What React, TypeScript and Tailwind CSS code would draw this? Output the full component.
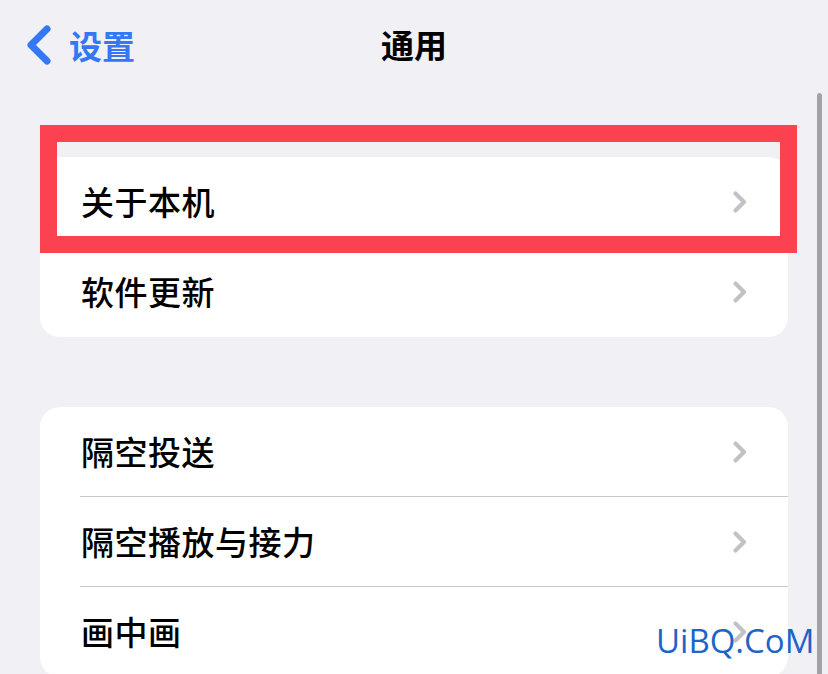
import React from "react";

const rowsTop = ["关于本机", "软件更新"];
const rowsBottom = ["隔空投送", "隔空播放与接力", "画中画"];

const Chevron: React.FC = () => (
  <svg width="16" height="24" viewBox="0 0 16 24" fill="none">
    <path
      d="M3.5 3.5 L12 12 L3.5 20.5"
      stroke="#c2c2c6"
      strokeWidth="4.2"
      strokeLinecap="round"
      strokeLinejoin="round"
    />
  </svg>
);

const Row: React.FC<{ label: string; last?: boolean }> = ({ label, last }) => (
  <div className="relative flex h-[90px] items-center justify-between pl-[41px] pr-[40px]">
    <span className="text-[33px] font-medium text-black tracking-[0.5px]">{label}</span>
    <Chevron />
    {!last && (
      <div className="absolute bottom-0 left-[40px] right-0 h-px bg-[#c8c8cb]" />
    )}
  </div>
);

const Card: React.FC<{ items: string[] }> = ({ items }) => (
  <div className="w-[748px] overflow-hidden rounded-[20px] bg-white">
    {items.map((label, i) => (
      <Row key={label} label={label} last={i === items.length - 1} />
    ))}
  </div>
);

export default function App() {
  return (
    <div
      className="relative h-[674px] w-[828px] overflow-hidden bg-[#f0f0f5]"
      style={{ fontFamily: '"Noto Sans CJK SC", "Noto Sans", sans-serif' }}
    >
      {/* nav bar */}
      <div className="grid h-[90px] grid-cols-3 items-center">
        <div className="flex items-center gap-[16px] pl-[25px]">
          <svg width="28" height="40" viewBox="0 0 28 40" fill="none">
            <path
              d="M22 4 L6 20 L22 36"
              stroke="#3478f6"
              strokeWidth="7"
              strokeLinecap="round"
              strokeLinejoin="round"
            />
          </svg>
          <span className="text-[33px] font-semibold leading-none text-[#3478f6]">设置</span>
        </div>
        <span className="text-center text-[33px] font-bold text-black">通用</span>
        <div />
      </div>

      <div className="flex flex-col gap-[70px] px-[40px] pt-[67px]">
        <Card items={rowsTop} />
        <Card items={rowsBottom} />
      </div>

      {/* annotation box */}
      <div className="absolute left-[40px] top-[125px] h-[128px] w-[757px] border-[17px] border-[#fc4150]" />

      {/* scroll indicator */}
      <div className="absolute left-[817px] top-[93px] h-[600px] w-[5px] rounded-full bg-[#a2a2a7]" />

      {/* watermark */}
      <div
        className="absolute left-[656px] top-[624px] text-[33px] leading-none text-[#1c64c8]"
        style={{ fontFamily: '"Open Sans", sans-serif' }}
      >
        UiBQ.CoM
      </div>
    </div>
  );
}
